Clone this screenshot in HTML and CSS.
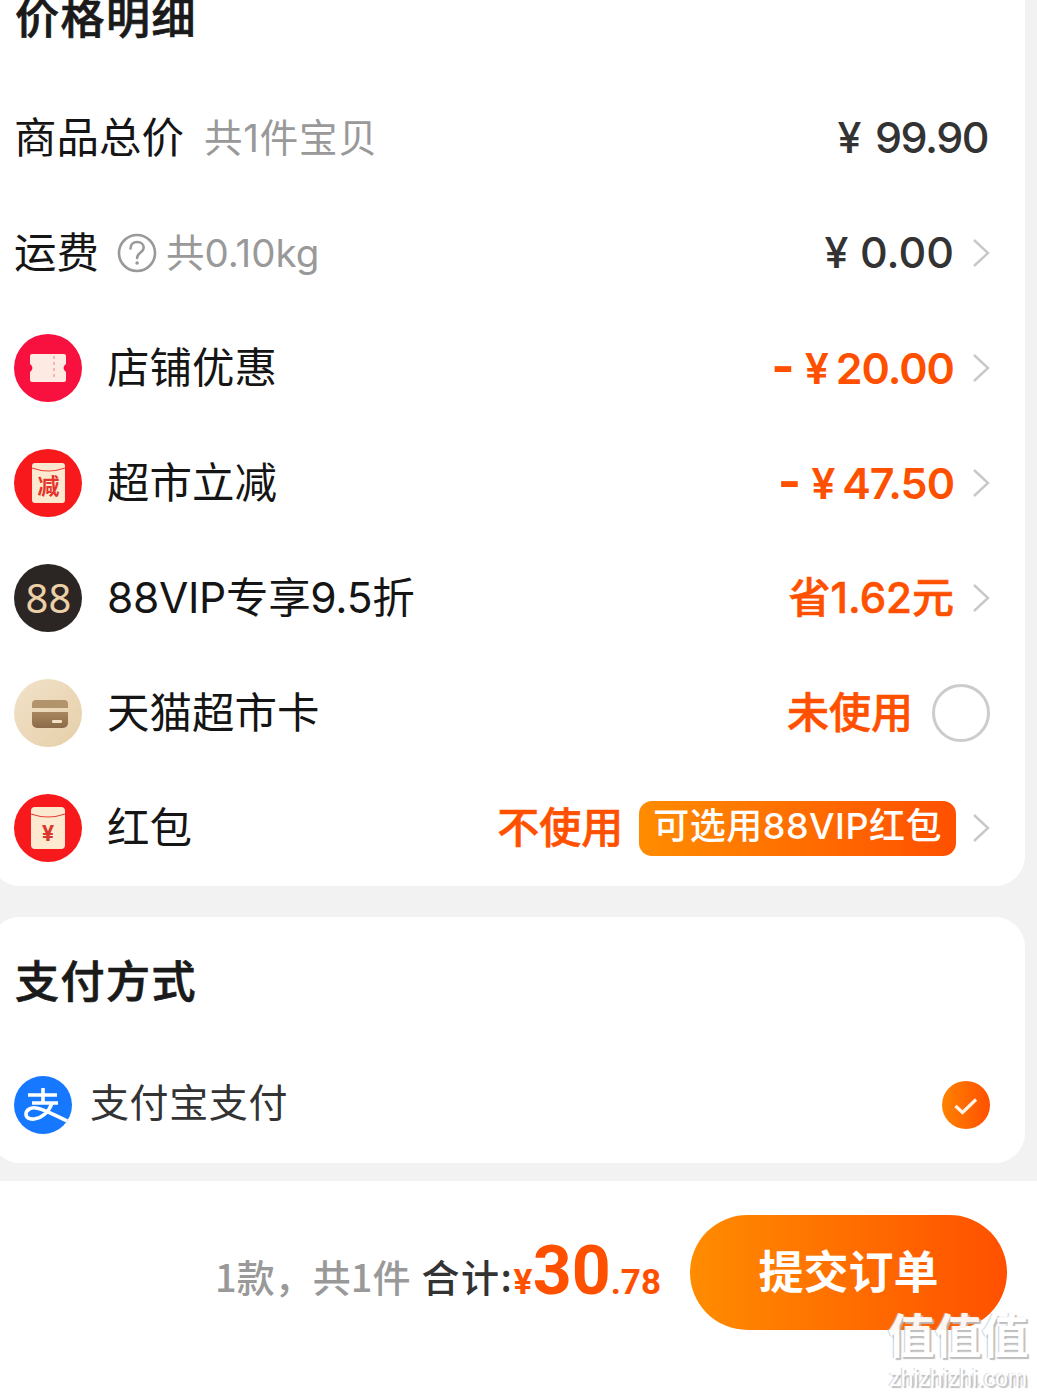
FILE: index.html
```html
<!DOCTYPE html>
<html lang="zh-CN">
<head>
<meta charset="utf-8">
<title>价格明细</title>
<link rel="stylesheet" href="styles.css">
</head>
<body>
<div class="page">
  <section class="card card-price">
    <h2 class="title title-price">价格明细</h2>
    <div class="row">
      <span class="label">商品总价</span><span class="sub sub-goods">共1件宝贝</span>
      <span class="value value-plain value-end">¥ 99.90</span>
    </div>
    <div class="row">
      <span class="label">运费</span>
      <svg class="help" viewBox="0 0 40 40"><circle cx="20" cy="20" r="18" fill="none" stroke="#999" stroke-width="2.6"/><path d="M13.5 15.5c0-4 3-6.5 6.7-6.500 3.800 0 6.500 2.400 6.500 5.700 0 4.700-6.600 5-6.600 10.300" fill="none" stroke="#999" stroke-width="2.600" stroke-linecap="round"/><circle cx="20.100" cy="30" r="1.800" fill="#999"/></svg>
      <span class="sub">共0.10kg</span>
      <span class="value value-plain">¥ 0.00</span>
      <svg class="chev" viewBox="0 0 18 30"><path d="M2 2l14 13L2 28" fill="none" stroke="#c8c8c8" stroke-width="2.400"/></svg>
    </div>
    <div class="row">
      <svg class="icon" viewBox="0 0 68 68"><circle cx="34" cy="34" r="34" fill="#f8103f"/><path d="M18 20h32a2 2 0 0 1 2 2v8a4.500 4.500 0 0 0 0 8v8a2 2 0 0 1-2 2H18a2 2 0 0 1-2-2v-8a4.500 4.500 0 0 0 0-8v-8a2 2 0 0 1 2-2z" fill="#fdeae2"/><path d="M40 22v24" stroke="#f6b6b0" stroke-width="2" stroke-dasharray="3 3" fill="none"/></svg>
      <span class="label">店铺优惠</span>
      <span class="value value-orange"><span class="minus">-</span>¥ 20.00</span>
      <svg class="chev" viewBox="0 0 18 30"><path d="M2 2l14 13L2 28" fill="none" stroke="#c8c8c8" stroke-width="2.400"/></svg>
    </div>
    <div class="row">
      <svg class="icon" viewBox="0 0 68 68"><circle cx="34" cy="34" r="34" fill="#f8191d"/><rect x="18" y="14" width="33" height="40" rx="3" fill="#fde9cf"/><path d="M18 19q16.500 6 33 0" fill="none" stroke="#e8423a" stroke-width="1.200"/><text class="icon-char" x="34.500" y="45" text-anchor="middle">减</text></svg>
      <span class="label">超市立减</span>
      <span class="value value-orange"><span class="minus">-</span>¥ 47.50</span>
      <svg class="chev" viewBox="0 0 18 30"><path d="M2 2l14 13L2 28" fill="none" stroke="#c8c8c8" stroke-width="2.400"/></svg>
    </div>
    <div class="row">
      <svg class="icon" viewBox="0 0 68 68"><circle cx="34" cy="34" r="34" fill="#2b2523"/><text class="icon-88" x="34.500" y="48.500" text-anchor="middle">88</text></svg>
      <span class="label label-vip">88VIP专享9.5折</span>
      <span class="value value-orange value-cn">省1.62元</span>
      <svg class="chev" viewBox="0 0 18 30"><path d="M2 2l14 13L2 28" fill="none" stroke="#c8c8c8" stroke-width="2.400"/></svg>
    </div>
    <div class="row">
      <svg class="icon" viewBox="0 0 68 68"><defs><linearGradient id="gold" x1="0" y1="0" x2="1" y2="1"><stop offset="0" stop-color="#f2e2ca"/><stop offset="1" stop-color="#e6cfa8"/></linearGradient><linearGradient id="wallet" x1="0" y1="0" x2="0" y2="1"><stop offset="0" stop-color="#a8865e"/><stop offset="1" stop-color="#8a6a48"/></linearGradient></defs><circle cx="34" cy="34" r="34" fill="url(#gold)"/><path d="M18 29v-4a4 4 0 0 1 4-4h28a4 4 0 0 1 4 4v4z" fill="#b2946c"/><path d="M18 33h36v11a5 5 0 0 1-5 5H23a5 5 0 0 1-5-5z" fill="url(#wallet)"/><rect x="38" y="41" width="10" height="3" rx="1" fill="#f3dfc4"/></svg>
      <span class="label">天猫超市卡</span>
      <span class="value value-orange value-cn">未使用</span>
      <span class="radio"></span>
    </div>
    <div class="row">
      <svg class="icon" viewBox="0 0 68 68"><circle cx="34" cy="34" r="34" fill="#f8191d"/><rect x="17" y="13" width="34" height="42" rx="4" fill="#fde9cf"/><path d="M17 20q17 6 34 0" fill="none" stroke="#e8423a" stroke-width="1.200"/><text class="icon-yen" x="34" y="47" text-anchor="middle">¥</text></svg>
      <span class="label">红包</span>
      <span class="value value-orange value-cn">不使用</span>
      <span class="tag">可选用88VIP红包</span>
      <svg class="chev chev-tag" viewBox="0 0 18 30"><path d="M2 2l14 13L2 28" fill="none" stroke="#c8c8c8" stroke-width="2.400"/></svg>
    </div>
  </section>

  <section class="card card-pay">
    <h2 class="title title-pay">支付方式</h2>
    <div class="row row-pay">
      <svg class="alipay" viewBox="0 0 58 58"><defs><clipPath id="ali"><circle cx="29" cy="29" r="29"/></clipPath></defs><circle cx="29" cy="29" r="29" fill="#1677ff"/><g fill="none" stroke="#fff" stroke-width="3.600" clip-path="url(#ali)"><path d="M14 19h29M29 12v15M18 27h26"/><path d="M38 27c-3 9-10 15-18 16-5 .5-8-1.500-8-5 0-4 5-7 10-6 10 1.500 19 8 38 16"/></g></svg>
      <span class="pay-name">支付宝支付</span>
      <svg class="check" viewBox="0 0 48 48"><defs><linearGradient id="ck" x1="0" y1="0" x2="1" y2="0"><stop offset="0" stop-color="#ff8200"/><stop offset="1" stop-color="#ff5000"/></linearGradient></defs><circle cx="24" cy="24" r="24" fill="url(#ck)"/><path d="M13.500 25l7 6.500 13.500-13" fill="none" stroke="#fff5e8" stroke-width="3.200"/></svg>
    </div>
  </section>

  <footer class="footer">
    <div class="summary">
      <span class="count">1款，共1件</span>
      <span class="total-label">合计:</span><span class="total"><span class="yen">¥</span><span class="int">30</span><span class="dec">.78</span></span>
    </div>
    <button class="submit">提交订单</button>
  </footer>

  <div class="watermark"><span class="wm-big">值值值</span><span class="wm-small">zhizhizhi.com</span></div>
</div>
</body>
</html>
```

FILE: styles.css
```css
* { box-sizing: border-box; }
html, body { margin: 0; padding: 0; }
body {
  width: 1037px;
  height: 1394px;
  overflow: hidden;
  background: #f2f2f2;
  font-family: Inter, "Noto Sans CJK SC", "Noto Sans", sans-serif;
  color: #111;
}
.page {
  position: relative;
  height: 1394px;
  display: flex;
  flex-direction: column;
  overflow: hidden;
}
.card {
  width: 1035px;
  margin-left: -10px;
  padding: 0 35px 0 24px;
  background: #fff;
  border-radius: 30px;
}
.card-price {
  margin-top: -40px;
  padding-top: 28px;
  height: 926px;
}
.card-pay {
  margin-top: 31px;
  padding-top: 35px;
  height: 246px;
}
.title {
  margin: 0;
  height: 60px;
  line-height: 60px;
  font-size: 44px;
  font-weight: 500;
  -webkit-text-stroke: .7px #1a1a1a;
  letter-spacing: 1.5px;
  padding-left: 1px;
  color: #1a1a1a;
}
.title-price { margin-bottom: 32.5px; }
.title-pay { margin-bottom: 35px; }
.row {
  display: flex;
  align-items: center;
  height: 115px;
}
.label {
  font-size: 42.5px;
  line-height: 60px;
  color: #151515;
}
.label-vip { letter-spacing: -.3px; }
.sub {
  font-size: 38.5px;
  line-height: 60px;
  color: #999;
  margin-left: 9px;
}
.sub-goods { margin-left: 20px; letter-spacing: .8px; }
.help { width: 40px; height: 40px; margin-left: 18px; }
.icon { width: 68px; height: 68px; margin-right: 25px; flex: none; }
.icon-char { font-size: 22px; font-weight: 700; fill: #e2352b; }
.icon-yen { font-size: 22px; font-weight: 700; fill: #d8372c; }
.icon-88 { font-size: 40px; font-weight: 400; fill: #ecd0a8; font-family: "Noto Sans", sans-serif; }
.value {
  margin-left: auto;
  font-size: 43px;
  line-height: 60px;
  font-weight: 500;
  margin-bottom: 2px;
  white-space: nowrap;
}
.value-end { margin-right: 2px; letter-spacing: -1.5px; word-spacing: 5px; }
.value-plain { color: #333; }
.value-orange { color: #ff5000; letter-spacing: -1px; word-spacing: -2px; font-weight: 600; }
.minus { margin-right: 11px; font-weight: 700; font-size: 50px; }
.value-cn { font-size: 42px; font-weight: 500; -webkit-text-stroke: .6px #ff5000; letter-spacing: 0; margin-bottom: 0; }
.chev { width: 18px; height: 30px; margin-left: 18px; flex: none; }
.chev-tag { margin-left: 16px; }
.radio {
  width: 58px;
  height: 58px;
  margin-left: 19px;
  border: 3px solid #ccc;
  border-radius: 50%;
  flex: none;
}
.tag {
  height: 55px;
  margin-left: 16px;
  padding: 0 14px;
  border-radius: 13px;
  background: linear-gradient(90deg, #ff8c00, #ff5000);
  color: #fff;
  font-size: 36px;
  font-weight: 500;
  line-height: 50px;
  letter-spacing: .5px;
  white-space: nowrap;
  flex: none;
}
.row-pay { height: 116px; }
.alipay { width: 58px; height: 58px; margin-right: 18px; flex: none; }
.pay-name { font-size: 39px; line-height: 60px; color: #333; letter-spacing: .6px; margin-bottom: 4px; }
.check { width: 48px; height: 48px; margin-left: auto; }
.footer {
  flex: 1;
  margin-top: 18px;
  background: #fff;
  display: flex;
  justify-content: flex-end;
  align-items: flex-start;
  padding: 34px 30px 0 0;
}
.summary {
  display: flex;
  align-items: baseline;
  height: 115px;
  padding-top: 24px;
  margin-right: 29px;
  white-space: nowrap;
}
.count { font-family: "Noto Sans CJK SC", sans-serif; font-size: 38px; font-weight: 500; color: #999; margin-right: 11px; }
.total-label { font-family: "Noto Sans CJK SC", sans-serif; font-size: 38px; font-weight: 500; color: #333; letter-spacing: 1.5px; }
.total { color: #ff5000; font-weight: 700; transform: translateY(2px); }
.yen { font-size: 34px; }
.int { font-size: 68px; line-height: 60px; font-family: Roboto, sans-serif; }
.dec { font-size: 35px; font-family: Roboto, sans-serif; }
.submit {
  width: 317px;
  height: 115px;
  padding: 0 0 6px;
  border: 0;
  border-radius: 58px;
  background: linear-gradient(90deg, #ff8c00, #ff5000);
  color: #fff;
  font-family: inherit;
  font-size: 45px;
  font-weight: 700;
}
.watermark {
  position: absolute;
  left: 885px;
  top: 1306px;
  width: 146px;
  display: flex;
  flex-direction: column;
  align-items: center;
  color: #fff;
  text-shadow: 2px 2px 1px #bbb, -1px 0 1px #ccc;
  opacity: .95;
}
.wm-big { font-size: 47px; line-height: 60px; font-weight: 700; white-space: nowrap; }
.wm-small { font-size: 23px; line-height: 24px; white-space: nowrap; font-family: "Liberation Sans", sans-serif; }
```
